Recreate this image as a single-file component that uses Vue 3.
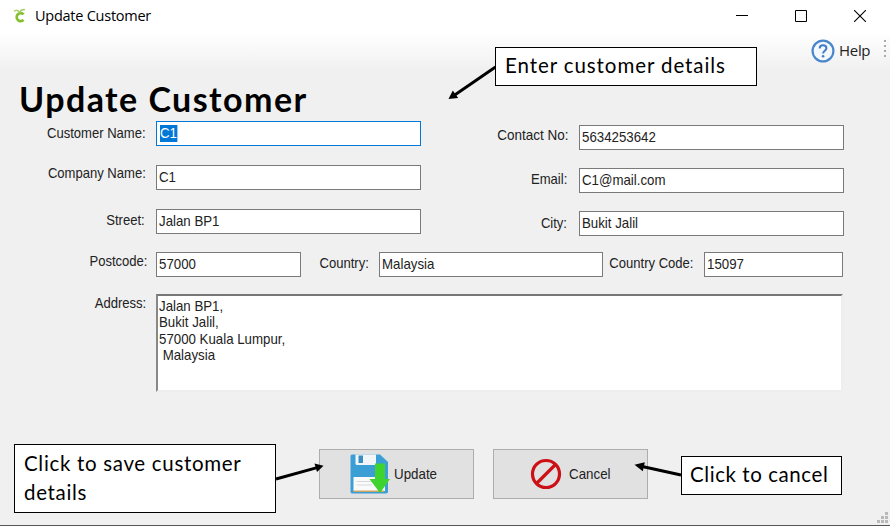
<script setup>
const left = [
  { label: 'Customer Name:', value: 'C1', cls: 'focused' },
  { label: 'Company Name:', value: 'C1', cls: 'up4' },
  { label: 'Street:', value: 'Jalan BP1', cls: 'up1 in1' },
]
const right = [
  { label: 'Contact No:', value: '5634253642', cls: 'up2' },
  { label: 'Email:', value: 'C1@mail.com', cls: 'up1 in2' },
  { label: 'City:', value: 'Bukit Jalil', cls: 'in2' },
]
const address = 'Jalan BP1,\nBukit Jalil,\n57000 Kuala Lumpur,\n Malaysia'
</script>

<template>
  <div class="page">
    <div class="window">
      <header class="titlebar">
        <svg class="logo" width="14" height="18" viewBox="0 0 14 18" fill="none">
          <path d="M10.6 8.4A4 4 0 1 0 10.6 13.9" stroke="#86bf2e" stroke-width="2.7" />
          <path d="M6.5 6.6C5.5 4.6 3.800 3.600 1 5M6.500 6.600C7.500 4.400 9 3.200 12 3.600" stroke="#a5cf63" stroke-width="1.400" />
        </svg>
        <span class="title">Update Customer</span>
        <div class="controls">
          <svg width="12" height="12" viewBox="0 0 12 12"><path d="M0 5.5H12" stroke="#000" /></svg>
          <svg width="12" height="12" viewBox="0 0 12 12"><path d="M.5.5H11.5V11.5H.5Z" stroke="#000" fill="none" /></svg>
          <svg width="12" height="12" viewBox="0 0 12 12"><path d="M0 0L12 12M12 0L0 12" stroke="#000" stroke-width="1.1" /></svg>
        </div>
      </header>

      <div class="toolbar">
        <svg width="24" height="24" viewBox="0 0 24 24" fill="none">
          <circle cx="12" cy="12" r="10.4" fill="#f4f8fd" stroke="#4a86cc" stroke-width="2.2" />
          <path d="M8.7 9.4C8.7 7.3 10 6.2 12 6.2S15.4 7.4 15.4 9.2C15.4 11.7 12.1 11.7 12.1 14.5" stroke="#3f7cc6" stroke-width="2" />
          <circle cx="12.1" cy="17.3" r="1.3" fill="#3f7cc6" />
        </svg>
        <span class="help">Help</span>
        <div class="grip"><i></i><i></i><i></i><i></i></div>
      </div>

      <h1><span>Update Customer</span></h1>

      <form class="form" @submit.prevent>
        <div class="columns">
          <div class="col col-left">
            <div v-for="f in left" :key="f.label" class="field" :class="f.cls">
              <label><span>{{ f.label }}</span></label>
              <div class="box"><span>{{ f.value }}</span></div>
            </div>
          </div>
          <div class="col col-right">
            <div v-for="f in right" :key="f.label" class="field" :class="f.cls">
              <label><span>{{ f.label }}</span></label>
              <div class="box"><span>{{ f.value }}</span></div>
            </div>
          </div>
        </div>

        <div class="locality">
          <div class="field up3"><label><span>Postcode:</span></label><div class="box"><span>57000</span></div></div>
          <div class="field up1"><label><span>Country:</span></label><div class="box"><span>Malaysia</span></div></div>
          <div class="field up1"><label><span>Country Code:</span></label><div class="box"><span>15097</span></div></div>
        </div>

        <div class="field address">
          <label><span>Address:</span></label>
          <div class="area"><span>{{ address }}</span></div>
        </div>

        <div class="actions">
          <button class="update" type="button">
            <svg width="40" height="42" viewBox="0 0 40 42">
              <path d="M2 1.5H30L38 9V38.500Q38 40.500 36 40.500H2Q.5 40.500 .5 38.500V3Q.5 1.500 2 1.500Z" fill="#3b9fd6" />
              <path d="M5.500 1.500H26V12H7Q5.500 12 5.500 10.500Z" fill="#f3f6f8" />
              <path d="M8.500 2.500H13V10H8.500Z" fill="#3b8fc0" />
              <path d="M3.500 24H35V38H3.500Z" fill="#fafafa" />
              <path d="M6.500 28.500H22M6.500 32H22" stroke="#d5d9dc" />
              <path d="M3.500 38.200H34" stroke="#d9a55b" stroke-width="1.400" />
              <path d="M25 10.500H35V26H40L30 40L19.500 26H25Z" fill="#3fd32f" />
            </svg>
            <span>Update</span>
          </button>
          <button class="cancel" type="button">
            <svg width="32" height="32" viewBox="0 0 32 32" fill="none" stroke="#cb1116" stroke-width="3.200">
              <circle cx="16" cy="16" r="13.500" /><path d="M6.500 25.500L25.500 6.500" />
            </svg>
            <span>Cancel</span>
          </button>
        </div>
      </form>

      <svg class="sizer" width="11" height="11" viewBox="0 0 11 11" fill="#b9b9b9">
        <path d="M8 0h3v3H8zM8 4h3v3H8zM8 8h3v3H8zM4 4h3v3H4zM4 8h3v3H4zM0 8h3v3H0z" />
      </svg>
    </div>

    <svg class="arrows" width="890" height="531" viewBox="0 0 890 531">
      <g stroke="#000" stroke-width="2.900">
        <path d="M495.500 67L454 95.500" /><path d="M276 479L318 467.300" /><path d="M681 475L640 466" />
      </g>
      <path d="M448.500 99L452.800 90.500L458.200 98Z" /><path d="M323.500 465.800L317 472L314.500 463.500Z" /><path d="M634.500 464.800L644.800 462.300L642.800 471.200Z" />
    </svg>
    <div class="note note-enter"><span>Enter customer details</span></div>
    <div class="note note-save"><span>Click to save customer<br>details</span></div>
    <div class="note note-cancel"><span>Click to cancel</span></div>
  </div>
</template>

<style>
body { margin: 0; background: #fff; }
</style>

<style scoped>
* { box-sizing: border-box; }
.page { position: relative; width: 890px; height: 531px; overflow: hidden; background: #fff; font-family: "Liberation Sans", Arial, sans-serif; color: #000; }
.window { position: relative; height: 526px; background: #f0f0f0; border-bottom: 1px solid #555; }
.titlebar { display: flex; align-items: center; height: 35px; padding: 0 24px 3px 13px; background: #fff; }
.logo { margin-top: -3px; }
.title { margin: -1px 0 0 8px; font: 14.500px "Open Sans", sans-serif; letter-spacing: -.25px; white-space: nowrap; }
.controls { display: flex; gap: 47px; margin-left: auto; }
.controls svg { display: block; }
.toolbar { display: flex; align-items: center; justify-content: flex-end; height: 35px; padding-right: 4px; background: linear-gradient(#fefefe, #f0f0f0); }
.toolbar svg { margin-top: -3px; }
.help { margin: -5px 13px 0 4px; width: 32px; font: 15px "Open Sans", sans-serif; letter-spacing: -.3px; color: #222; }
.grip { display: grid; gap: 3px; margin-top: -8px; }
.grip i { width: 2px; height: 2px; background: #aaa; }
h1 { display: flex; margin: 0; height: 51px; padding: 8px 0 0 19px; font: bold 34px/42px Lato, sans-serif; letter-spacing: 1.450px; white-space: nowrap; }
.columns { display: flex; }
.col { display: flex; flex-direction: column; }
.col-left { width: 421px; gap: 19px; }
.col-right { width: 423px; gap: 18px; padding-top: 4px; }
.field { display: flex; font-size: 14.500px; line-height: 17px; color: #222; }
.field span { white-space: pre; }
label { display: flex; flex: none; align-items: center; justify-content: flex-end; height: 25px; }
label span { transform: scaleX(.9); transform-origin: right; }
.col-left label { width: 156px; padding-right: 10px; }
.col-right label { width: 158px; padding-right: 10px; }
.col-right .field:first-child label span { transform: scaleX(.93); }
.box { display: flex; flex: 1; align-items: center; height: 25px; padding-left: 2px; border: 1px solid #7a7a7a; background: #fff; }
.box span, .area span { transform: scaleX(.915); transform-origin: left; }
.focused .box { border-color: #0078d7; padding-left: 3px; }
.focused .box span { background: #0078d7; color: #fff; }
.up1 label { padding-bottom: 2px; }
.up2 label { padding-bottom: 4px; }
.up3 label { padding-bottom: 6px; }
.up4 label { padding-bottom: 8px; }
.field.in1 label { padding-right: 11px; }
.field.in2 label { padding-right: 12px; }
.locality { display: grid; grid-template-columns: 301px 302px 240px; margin-top: 16px; }
.locality label { width: 156px; padding-right: 9px; }
.locality .field:nth-child(2) label { width: 78px; padding-right: 10px; }
.locality .field:nth-child(3) label { width: 101px; padding-right: 11px; }
.address { margin-top: 17px; }
.address label { width: 156px; padding-right: 10px; height: 18px; }
.area { display: flex; align-items: flex-start; width: 687px; height: 98px; padding: 2px 0 0 1px; border: 2px solid; border-color: #777 #eee #eee #888; background: #fff; line-height: 16.300px; }
.actions { display: flex; gap: 19px; margin: 57px 0 0 319px; }
button { display: flex; align-items: center; width: 155px; height: 50px; padding: 0; border: 1px solid #adadad; background: #e1e1e1; font: 14.500px "Liberation Sans", Arial, sans-serif; color: #222; }
button span { transform: scaleX(.92); transform-origin: left; }
.update { padding-left: 30px; }
.update span { margin-left: 4px; }
.cancel { padding-left: 36px; }
.cancel span { margin-left: 7px; }
.sizer { position: absolute; right: 2px; bottom: 2px; }
.arrows { position: absolute; inset: 0; }
.note { position: absolute; display: flex; align-items: center; border: 1px solid #000; background: #fff; font: 20.500px/29px Lato, sans-serif; letter-spacing: .5px; white-space: nowrap; }
.note-enter { left: 495px; top: 47px; width: 262px; height: 39px; padding: 0 0 2px 9px; letter-spacing: .920px; }
.note-save { left: 14px; top: 444px; width: 262px; height: 69px; padding: 0 0 2px 9px; letter-spacing: .680px; }
.note-cancel { left: 681px; top: 456px; width: 161px; height: 39px; padding: 0 0 2px 8px; letter-spacing: .570px; }
</style>
